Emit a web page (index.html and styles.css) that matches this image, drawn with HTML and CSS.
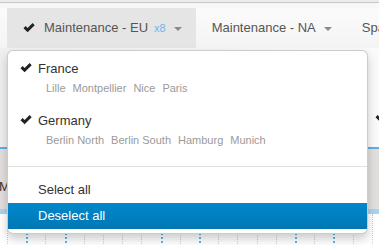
FILE: index.html
```html
<!DOCTYPE html>
<html lang="en">
<head>
  <meta charset="UTF-8" />
  <title>Maintenance planning</title>
  <link rel="stylesheet" href="styles.css">
</head>
<body>

  <div class="topbar"><div class="topbar-line"></div></div>

  <nav class="navbar">
    <div class="tab active">
      <a href="#" class="tab-link">
        <svg class="check" width="12" height="10" viewBox="0 0 12 10"><path d="M0.5 5.2 L2.6 3.1 L4.6 5.1 L9.6 0.1 L11.7 2.2 L4.6 9.3 Z" fill="#222"/></svg>
        <span>Maintenance - EU</span>
        <span class="count">x8</span>
        <b class="caret"></b>
      </a>

      <ul class="dropdown">
        <li class="country">
          <div class="country-name">
            <svg class="check" width="12" height="10" viewBox="0 0 12 10"><path d="M0.5 5.2 L2.6 3.1 L4.6 5.1 L9.6 0.1 L11.7 2.2 L4.6 9.3 Z" fill="#222"/></svg>
            <span>France</span>
          </div>
          <div class="cities">
            <span>Lille</span><span>Montpellier</span><span>Nice</span><span>Paris</span>
          </div>
        </li>
        <li class="country">
          <div class="country-name">
            <svg class="check" width="12" height="10" viewBox="0 0 12 10"><path d="M0.5 5.2 L2.6 3.1 L4.6 5.1 L9.6 0.1 L11.7 2.2 L4.6 9.3 Z" fill="#222"/></svg>
            <span>Germany</span>
          </div>
          <div class="cities">
            <span>Berlin North</span><span>Berlin South</span><span>Hamburg</span><span>Munich</span>
          </div>
        </li>
        <li class="divider"></li>
        <li class="action"><a href="#">Select all</a></li>
        <li class="action selected"><a href="#">Deselect all</a></li>
      </ul>
    </div>

    <div class="tab">
      <a href="#" class="tab-link">
        <span>Maintenance - NA</span>
        <b class="caret"></b>
      </a>
    </div>

    <div class="tab">
      <a href="#" class="tab-link"><span>Spare parts</span></a>
    </div>
  </nav>

  <section class="board">
    <div class="lane-empty">
      <svg class="stray" width="12" height="10" viewBox="0 0 12 10"><path d="M0.5 5.2 L2.6 3.1 L4.6 5.1 L9.6 0.1 L11.7 2.2 L4.6 9.3 Z" fill="#222"/></svg>
    </div>
    <div class="lane">
      <span class="lane-title">M</span>
    </div>
    <div class="lane-scale"></div>
    <div class="timeline">
      <div class="col"></div><div class="col mark"></div><div class="col"></div><div class="col mark"></div>
      <div class="col"></div><div class="col"></div><div class="col"></div><div class="col"></div>
      <div class="col mark"></div><div class="col"></div><div class="col mark"></div><div class="col"></div>
      <div class="col"></div><div class="col"></div><div class="col"></div><div class="col mark"></div>
      <div class="col"></div><div class="col mark"></div><div class="col"></div><div class="col"></div>
    </div>
  </section>

</body>
</html>
```

FILE: styles.css
```css
* {
  box-sizing: border-box;
}

body {
  margin: 0;
  padding: 0;
  background: #fff;
  font-family: "Liberation Sans", Arial, sans-serif;
  font-size: 13px;
  color: #333;
  overflow: hidden;
}

ul {
  list-style: none;
  margin: 0;
  padding: 0;
}

a {
  text-decoration: none;
}

/* bande du haut */
.topbar {
  padding-top: 2px;
  background: #ececec;
}

.topbar-line {
  height: 6px;
  border-top: 1px solid #c6c6c6;
  background: #f7f7f7;
}

/* navbar */
.navbar {
  display: flex;
  height: 40px;
  padding-left: 7px;
  background: linear-gradient(#fbfbfb, #f4f4f4);
  white-space: nowrap;
}

.tab {
  position: relative;
  display: flex;
}

.tab-link {
  display: flex;
  align-items: center;
  padding: 0 14px 0 16px;
  color: #555;
  line-height: 16px;
}

.tab.active {
  background: #e5e5e5;
}

.tab-link .check {
  margin-right: 9px;
}

.count {
  margin-left: 6px;
  font-size: 11px;
  color: #6db6ea;
}

.caret {
  display: inline-block;
  width: 0;
  height: 0;
  margin-left: 8px;
  margin-top: 1px;
  border-top: 4px solid #8a8a8a;
  border-left: 4px solid transparent;
  border-right: 4px solid transparent;
}

/* menu déroulant */
.dropdown {
  position: absolute;
  top: 100%;
  left: 0;
  z-index: 10;
  width: 361px;
  margin-top: 2px;
  padding: 5px 0 4px;
  background: #fff;
  border: 1px solid rgba(0, 0, 0, 0.2);
  border-radius: 6px;
  box-shadow: 0 5px 10px rgba(0, 0, 0, 0.2);
}

.country {
  padding: 2px 12px 11px;
}

.country-name {
  display: flex;
  align-items: center;
  height: 20px;
  color: #333;
}

.country-name .check {
  width: 12px;
  margin-right: 6px;
}

.cities {
  display: flex;
  gap: 7px;
  margin-top: 2px;
  padding-left: 26px;
  font-size: 11px;
  line-height: 17px;
  color: #9a9a9a;
}

.divider {
  height: 1px;
  margin: 6px 0 10px;
  background: #e0e0e0;
}

.action a {
  display: block;
  height: 26px;
  padding-left: 30px;
  line-height: 26px;
  color: #333;
}

.action.selected a {
  color: #fff;
  background: linear-gradient(#0088cc, #0077b3);
}

/* planning derrière */
.board {
  display: flex;
  flex-direction: column;
}

.lane-empty {
  display: flex;
  justify-content: flex-end;
  height: 99px;
  padding-top: 64px;
  background: linear-gradient(90deg, #efefef, #fafafa);
}

.stray {
  margin-right: -8px;
}

.lane {
  display: flex;
  align-items: flex-end;
  height: 62px;
  padding-bottom: 15px;
  border-top: 2px solid #5aafe2;
  background: #e2dede;
}

.lane-title {
  margin-left: -1px;
  color: #333;
}

.lane-scale {
  height: 5px;
  background: #a9d4ef;
}

.timeline {
  display: flex;
  height: 40px;
  padding-left: 7px;
}

.col {
  flex: 0 0 19.21px;
  border-left: 1px dotted #cfcfcf;
}

.col.mark {
  border-left: 2px dotted #5db5e5;
}
```
